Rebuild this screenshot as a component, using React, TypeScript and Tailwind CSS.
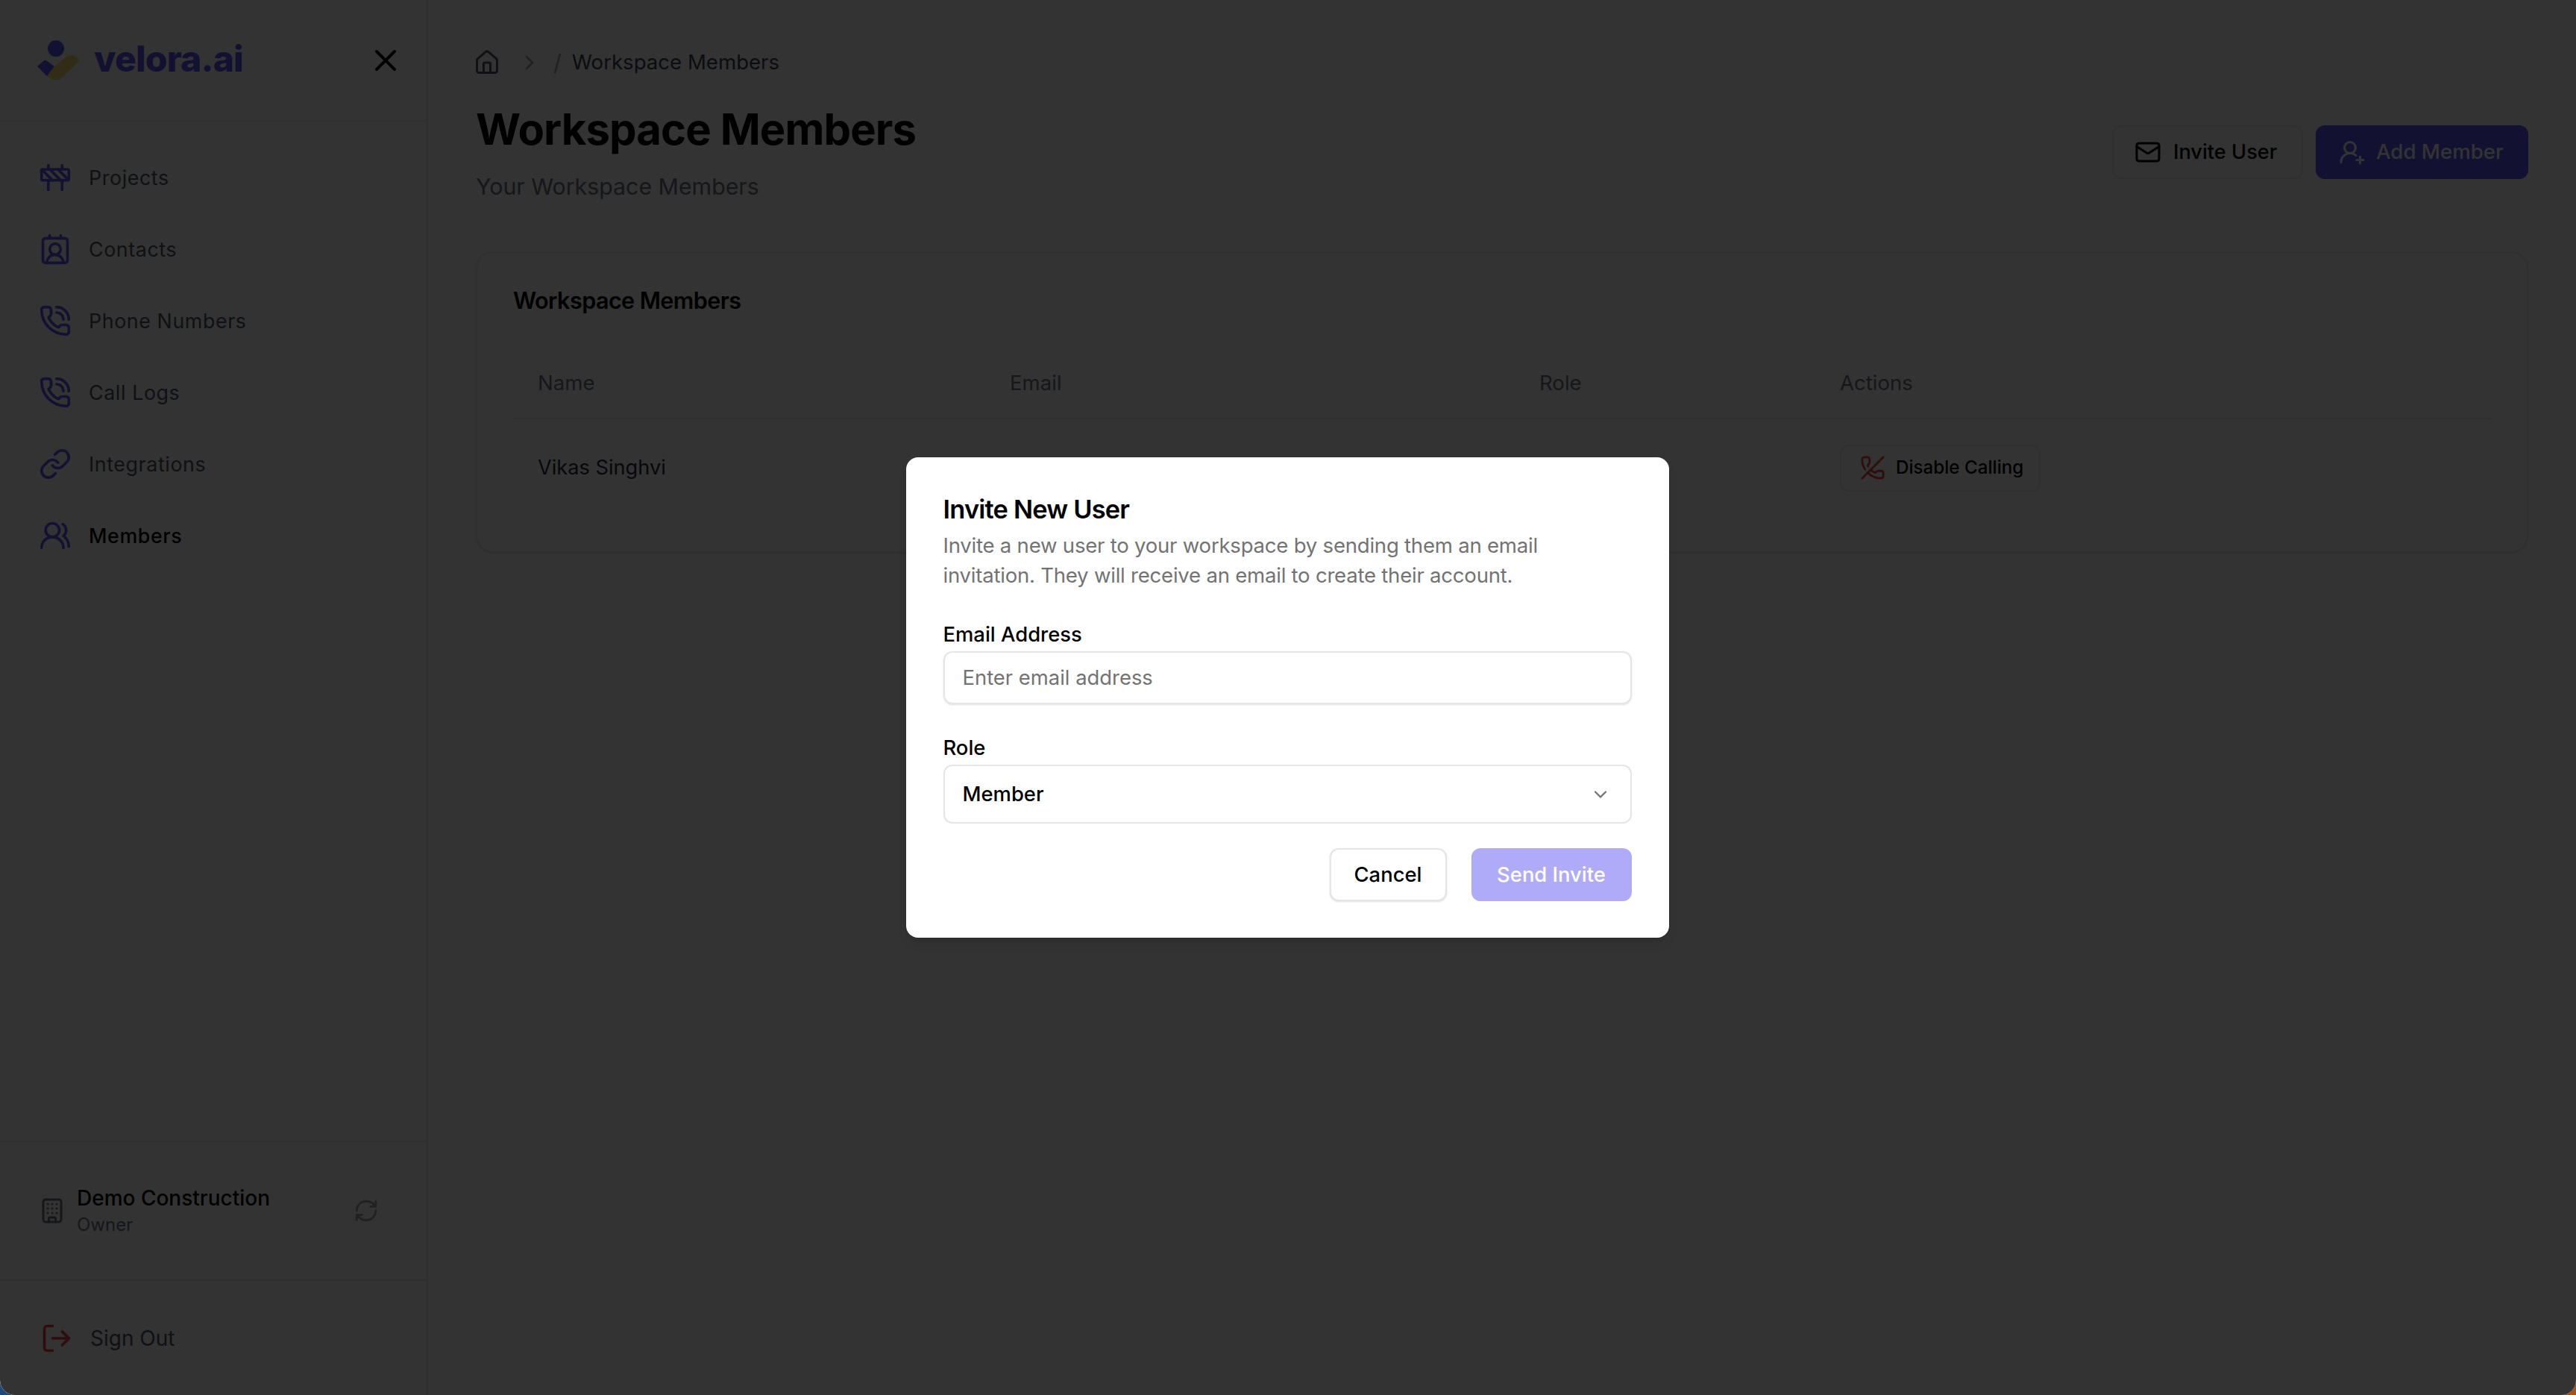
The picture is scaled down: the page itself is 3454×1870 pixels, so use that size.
import React from 'react';
import {
  Construction,
  ContactRound,
  PhoneCall,
  Link,
  UsersRound,
  X,
  Building,
  RefreshCw,
  LogOut,
  House,
  ChevronRight,
  ChevronDown,
  Mail,
  UserRoundPlus,
  PhoneOff,
} from 'lucide-react';

const navItems = [
  { label: 'Projects', icon: Construction },
  { label: 'Contacts', icon: ContactRound },
  { label: 'Phone Numbers', icon: PhoneCall },
  { label: 'Call Logs', icon: PhoneCall },
  { label: 'Integrations', icon: Link },
  { label: 'Members', icon: UsersRound, active: true },
];

const Logo = () => (
  <svg viewBox="0 0 56 54" className="h-[54px] w-[56px] shrink-0">
    <circle cx="25" cy="11" r="11" fill="#6157f3" />
    <path d="M0 35 L8 28 Q10 26 12 27 L23 35 L13 48 Z" fill="#6157f3" />
    <path d="M13 48 L23 35 L38 23 Q44 18 50 21 L55 25 Q57 27 54 30 L34 49 Q28 55 22 53 Q17 52 13 48 Z" fill="#fbd46a" />
  </svg>
);

const Sidebar = () => (
  <aside className="flex h-full w-[574px] shrink-0 flex-col border-r-2 border-[#ebebeb] bg-white">
    <div className="flex h-[163px] shrink-0 items-center justify-between border-b-2 border-[#ebebeb] pl-[50px] pr-[18px]">
      <div className="flex items-center gap-[20px]">
        <Logo />
        <span className="-mt-[3px] text-[48px] font-extrabold leading-none tracking-[-0.8px] text-[#6157f3]">velora.ai</span>
      </div>
      <button className="flex h-[74px] w-[74px] items-center justify-center rounded-xl text-black">
        <X className="h-[48px] w-[48px]" strokeWidth={2} />
      </button>
    </div>
    <nav className="flex flex-col pt-[27px]">
      {navItems.map((item) => (
        <div
          key={item.label}
          className={`flex h-[96px] items-center gap-[23px] pl-[52px] text-[26.8px] tracking-[0.6px] ${
            item.active ? 'font-medium text-black' : 'text-[#4b5563]'
          }`}
        >
          <item.icon className="h-[44px] w-[44px] text-[#6157f3]" strokeWidth={2} />
          <span>{item.label}</span>
        </div>
      ))}
    </nav>
    <div className="flex-1" />
    <div className="flex h-[186px] shrink-0 items-center justify-between border-t-2 border-[#ebebeb] pl-[52px] pr-[64px]">
      <div className="flex items-center gap-[15px]">
        <Building className="h-[36px] w-[36px] text-[#6b7280]" strokeWidth={2} />
        <div className="flex flex-col">
          <span className="text-[28px] font-medium leading-[38px] text-black">Demo Construction</span>
          <span className="text-[24px] leading-[34px] text-[#6b7280]">Owner</span>
        </div>
      </div>
      <RefreshCw className="h-[34px] w-[34px] text-[#9ca3af]" strokeWidth={2} />
    </div>
    <div className="flex h-[155px] shrink-0 items-start gap-[23px] border-t-2 border-[#ebebeb] pl-[54px] pt-[55px]">
      <LogOut className="h-[44px] w-[44px] text-[#ef4444]" strokeWidth={2} />
      <span className="text-[28px] leading-[44px] text-[#4b5563]">Sign Out</span>
    </div>
  </aside>
);

const MemberTable = () => (
  <div className="mt-[65px] h-[404px] rounded-[24px] border-2 border-[#ebebeb] bg-white px-[48px] pt-[42px] shadow-sm">
    <h2 className="text-[30.6px] font-semibold leading-[44px] tracking-[-0.6px] text-black">Workspace Members</h2>
    <div className="mt-[39px] grid h-[98px] grid-cols-[633px_710px_403px_1fr] items-center border-b-2 border-[#ebebeb] pl-[33px] pt-[3px] text-[27.6px] text-[#6b7280]">
      <span>Name</span>
      <span>Email</span>
      <span>Role</span>
      <span>Actions</span>
    </div>
    <div className="grid h-[130px] grid-cols-[633px_710px_403px_1fr] items-center pl-[33px] text-[27.2px] text-[#1f2937]">
      <span>Vikas Singhvi</span>
      <span />
      <span />
      <button className="flex h-[63px] w-[269px] items-center gap-[14px] rounded-xl border-2 border-[#ebebeb] pl-[25px] text-[24.2px] font-medium text-black">
        <PhoneOff className="h-[34px] w-[34px] shrink-0 text-[#ef4444]" strokeWidth={2} />
        Disable Calling
      </button>
    </div>
  </div>
);

const Main = () => (
  <main className="flex h-full flex-1 flex-col pl-[64px] pr-[64px] pt-[62px]">
    <div className="flex h-[44px] items-center text-[#4b5563]">
      <House className="-ml-[3px] h-[36px] w-[36px]" strokeWidth={2} />
      <ChevronRight className="ml-[23px] h-[32px] w-[32px] text-[#9ca3af]" strokeWidth={2} />
      <span className="ml-[16px] text-[30px] text-[#9ca3af]">/</span>
      <span className="ml-[14px] text-[27.6px] text-[#374151]">Workspace Members</span>
    </div>
    <div className="mt-[23px] flex items-start justify-between">
      <div>
        <h1 className="text-[58px] font-bold leading-[88px] tracking-[-0.9px] text-black">Workspace Members</h1>
        <p className="mt-[11px] text-[30.3px] leading-[44px] text-[#6b7280]">Your Workspace Members</p>
      </div>
      <div className="mt-[39px] flex gap-[17px]">
        <button className="flex h-[72px] w-[256px] items-center gap-[16px] rounded-xl border-2 border-[#ebebeb] pl-[28px] text-[27.2px] font-medium text-black">
          <Mail className="h-[36px] w-[36px]" strokeWidth={2} />
          Invite User
        </button>
        <button className="flex h-[72px] w-[285px] items-center gap-[14px] rounded-xl bg-[#6157f3] pl-[31px] text-[27.6px] font-medium text-white">
          <UserRoundPlus className="h-[36px] w-[36px]" strokeWidth={2} />
          Add Member
        </button>
      </div>
    </div>
    <MemberTable />
  </main>
);

const InviteDialog = () => (
  <div className="absolute inset-0 flex items-center justify-center bg-black/80">
    <div className="mr-[2px] flex h-[644px] w-[1023px] flex-col rounded-[16px] bg-white px-[50px] pt-[46px] shadow-lg">
      <h3 className="text-[34.4px] font-semibold leading-[48px] tracking-[-0.8px] text-black">Invite New User</h3>
      <p className="mt-[5px] w-[860px] text-[27.6px] leading-[39.6px] tracking-[-0.25px] text-[#737373]">
        Invite a new user to your workspace by sending them an email invitation. They will receive an email to create their account.
      </p>
      <label className="mt-[39px] text-[27.4px] font-medium leading-[40px] text-black">Email Address</label>
      <div className="mt-[3px] flex h-[71px] items-center rounded-xl border-2 border-[#e5e5e5] px-[24px] text-[27.4px] text-[#737373] shadow-sm">
        Enter email address
      </div>
      <label className="mt-[38px] text-[27.4px] font-medium leading-[40px] text-black">Role</label>
      <div className="mt-[3px] flex h-[79px] items-center justify-between rounded-xl border-2 border-[#e5e5e5] pl-[24px] pr-[26px] text-[27.4px] font-medium text-black">
        Member
        <ChevronDown className="h-[28px] w-[28px] text-[#737373]" strokeWidth={2} />
      </div>
      <div className="mt-[33px] flex justify-end gap-[33px]">
        <button className="h-[71px] w-[157px] rounded-xl border-2 border-[#e5e5e5] bg-white text-[27.4px] font-medium text-black shadow-sm">
          Cancel
        </button>
        <button className="h-[71px] w-[215px] rounded-xl bg-[#b0abf9] text-[27.4px] font-medium text-white">
          Send Invite
        </button>
      </div>
    </div>
  </div>
);

export default function App() {
  return (
    <div className="h-[1870px] w-[3454px] overflow-hidden bg-gradient-to-r from-[#1d4a7a] to-[#a0521f]">
      <div className="relative flex h-full w-full overflow-hidden rounded-b-[20px] bg-white font-['Inter',sans-serif]">
        <Sidebar />
        <Main />
        <InviteDialog />
      </div>
    </div>
  );
}
